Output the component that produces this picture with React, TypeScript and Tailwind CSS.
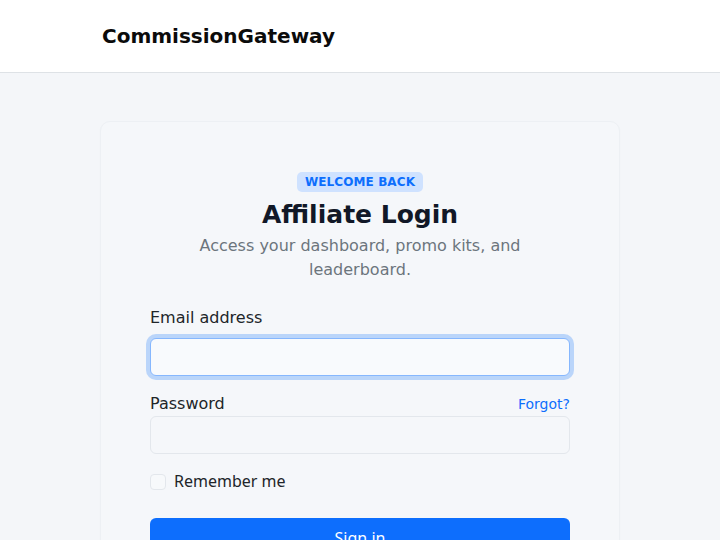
import React from 'react';

const sans = 'font-["DejaVu_Sans",sans-serif]';

export default function App() {
  return (
    <div className={`min-h-screen bg-[#f4f6f9] ${sans} text-[#212529]`}>
      {/* Header */}
      <header className="h-[73px] bg-white border-b border-[#dee2e6] flex items-center">
        <div className="w-[520px] mx-auto px-[2px]">
          <span className="text-[20px] font-bold text-[#0b0b0b]">CommissionGateway</span>
        </div>
      </header>

      {/* Card */}
      <main className="pt-[48px]">
        <div className="w-[520px] mx-auto rounded-[10px] border border-[#edf0f4] bg-[#f5f7fa] shadow-[0_1px_3px_rgba(0,0,0,0.02)] px-[49px] pt-[50px] pb-10">
          <div className="flex flex-col items-center text-center">
            <span className="rounded-[5px] bg-[#cfe2ff] px-[8px] h-[20px] flex items-center text-[12px] font-bold tracking-[0.1px] text-[#0d6efd]">
              WELCOME BACK
            </span>
            <h1 className="mt-[7px] text-[25px] leading-[31px] font-bold text-[#111827]">Affiliate Login</h1>
            <p className="mt-[4px] max-w-[360px] text-[16px] leading-[24px] text-[#6c757d]">
              Access your dashboard, promo kits, and leaderboard.
            </p>
          </div>

          <form className="mt-[24px]">
            <label className="block text-[16px] leading-[24px] mb-[8px]">Email address</label>
            <input
              type="email"
              className="block w-full h-[38px] rounded-[6px] border border-[#86b7fe] bg-[#f8fafd] shadow-[0_0_0_4px_rgba(13,110,253,0.25)] outline-none"
            />

            <div className="mt-[16px] flex items-center justify-between h-[24px]">
              <label className="text-[16px]">Password</label>
              <a className="text-[14px] text-[#0d6efd]">Forgot?</a>
            </div>
            <input
              type="password"
              className="block w-full h-[38px] rounded-[6px] border border-[#e3e7ec] bg-[#f5f7fa] outline-none"
            />

            <label className="mt-[19px] flex items-center gap-[8px] h-[18px]">
              <span className="w-[16px] h-[16px] rounded-[4px] border border-[#e3e7ec] bg-[#f7f9fb]" />
              <span className='font-["Noto_Sans",sans-serif] text-[16px] leading-[18px] -mt-[2px] text-[#212529]'>Remember me</span>
            </label>

            <button
              type="button"
              className='mt-[27px] w-full h-[40px] rounded-[6px] bg-[#0d6efd] text-white text-[16px] font-["Noto_Sans",sans-serif]'
            >
              Sign in
            </button>
          </form>
        </div>
      </main>
    </div>
  );
}
